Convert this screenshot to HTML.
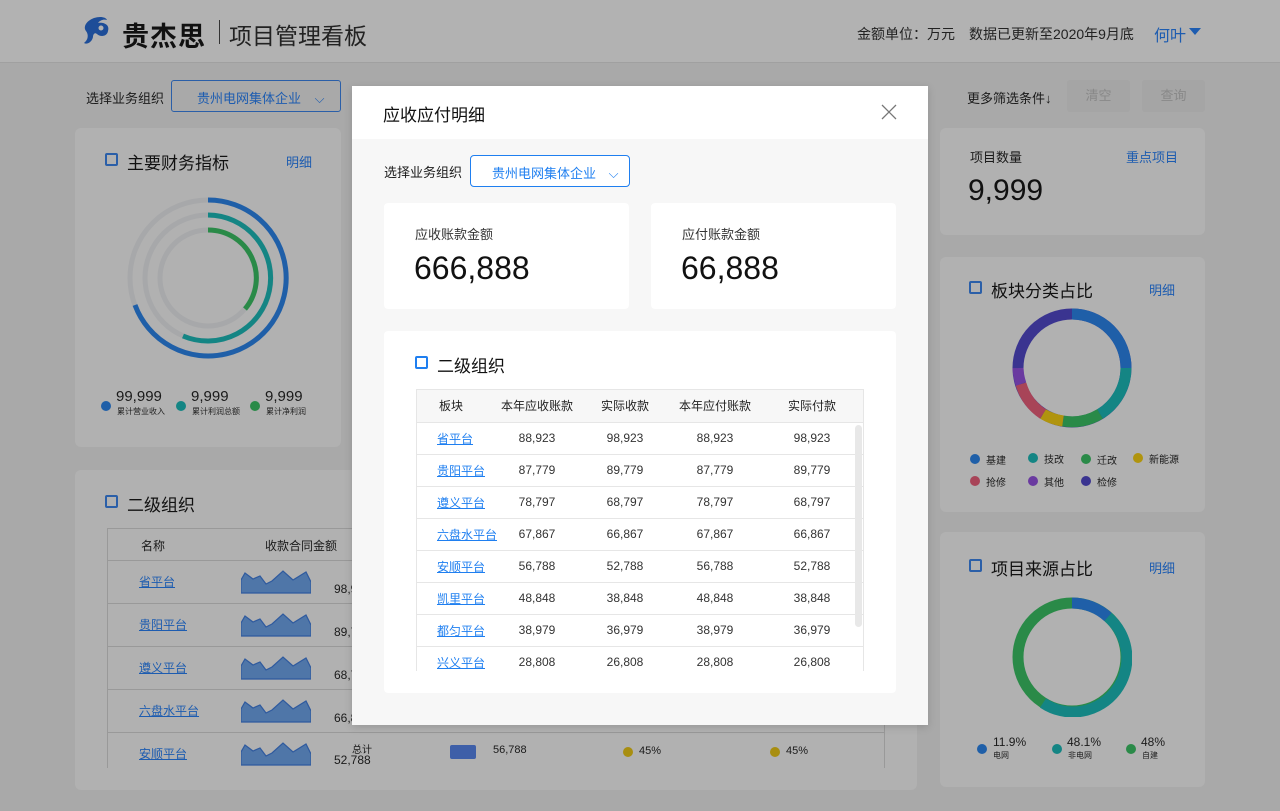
<!DOCTYPE html>
<html><head><meta charset="utf-8">
<style>
*{margin:0;padding:0;box-sizing:border-box}
body{width:1280px;height:811px;overflow:hidden;background:#a9a9a9;font-family:"Liberation Sans","Noto Sans CJK SC",sans-serif;color:#1a1a1a;position:relative}
.abs{position:absolute}
.card{position:absolute;background:#b1b1b1;border-radius:6px}
.cb{position:absolute;width:13px;height:13px;border:2px solid #2b5fa8;border-radius:2px}
.t17{font-size:17px;color:#111}
.lnk{color:#1d5cb0;font-size:13px}
.dot{position:absolute;width:10px;height:10px;border-radius:50%}
.sm{font-size:10px;color:#222}
.m{table-layout:fixed}
.m td{height:32px;border-bottom:1px solid #e6e6e6;font-size:12px;color:#333;text-align:center;white-space:nowrap}
.m td:first-child{text-align:left;padding-left:20px}
.m a{color:#1f7ff0;text-decoration:underline}
.m th{height:32px;font-size:12px;font-weight:normal;color:#222;background:#f7f7f7;border-bottom:1px solid #e6e6e6;white-space:nowrap}
</style></head><body>

<div class="abs" style="left:0;top:0;width:1280px;height:63px;background:#b2b2b2;border-bottom:1px solid #a0a0a0"></div>
<svg class="abs" style="left:80px;top:15px" width="34" height="32" viewBox="0 0 34 32">
<path d="M14 3 C20 1 26 2 27 5 C24 4 20 5 18 8 C24 7 30 10 28 16 C27 22 20 22 17 19 C15 17 13 19 13 22 C12 27 7 30 4 28 C8 25 9 20 6 16 C3 12 6 6 14 3Z" fill="#1d4d98"/>
<circle cx="21" cy="13" r="2.5" fill="#b2b2b2"/>
</svg>
<div class="abs" style="left:122px;top:15px;font-size:27px;font-weight:bold;color:#111;letter-spacing:1px">贵杰思</div>
<div class="abs" style="left:219px;top:20px;width:1px;height:24px;background:#333"></div>
<div class="abs" style="left:229px;top:17px;font-size:23px;color:#222">项目管理看板</div>
<div class="abs" style="left:857px;top:24px;font-size:14px;color:#222">金额单位：万元</div>
<div class="abs" style="left:969px;top:24px;font-size:14px;color:#222">数据已更新至2020年9月底</div>
<div class="abs" style="left:1154px;top:22px;font-size:16px;color:#1d5cb0">何叶</div>
<div class="abs" style="left:1189px;top:28px;width:0;height:0;border-left:6px solid transparent;border-right:6px solid transparent;border-top:7px solid #1d5cb0"></div>

<div class="abs" style="left:86px;top:88px;font-size:13px">选择业务组织</div>
<div class="abs" style="left:171px;top:80px;width:170px;height:32px;border:1px solid #2b5fa8;border-radius:3px;font-size:13px;color:#1d5cb0;padding:7px 0 0 25px;white-space:nowrap">贵州电网集体企业 <span style="margin-left:10px">⌵</span></div>
<div class="abs" style="left:967px;top:88px;font-size:13px">更多筛选条件↓</div>
<div class="abs" style="left:1067px;top:80px;width:63px;height:32px;background:#a5a5a5;border-radius:3px;font-size:13px;color:#888;text-align:center;line-height:32px">清空</div>
<div class="abs" style="left:1142px;top:80px;width:63px;height:32px;background:#a5a5a5;border-radius:3px;font-size:13px;color:#888;text-align:center;line-height:32px">查询</div>

<div class="card" style="left:75px;top:128px;width:266px;height:319px"></div>
<div class="cb" style="left:105px;top:153px"></div>
<div class="abs t17" style="left:127px;top:149px">主要财务指标</div>
<div class="abs lnk" style="left:286px;top:152px">明细</div>
<svg class="abs" style="left:120px;top:190px" width="176" height="176" viewBox="-88 -88 176 176">
<g fill="none" stroke-width="5">
<circle r="78" stroke="#a7a8aa"/><circle r="63" stroke="#a7a8aa"/><circle r="48" stroke="#a7a8aa"/>
<path d="M0 -78 A78 78 0 1 1 -73 27" stroke="#1f5fa8"/>
<path d="M0 -63 A63 63 0 1 1 -25 58" stroke="#148584"/>
<path d="M0 -48 A48 48 0 0 1 37 31" stroke="#2a8a48"/>
</g></svg>
<div class="dot" style="left:101px;top:401px;background:#1f5fa8"></div>
<div class="abs" style="left:116px;top:388px;font-size:15px">99,999</div>
<div class="abs sm" style="left:117px;top:406px;font-size:8px">累计营业收入</div>
<div class="dot" style="left:176px;top:401px;background:#148584"></div>
<div class="abs" style="left:191px;top:388px;font-size:15px">9,999</div>
<div class="abs sm" style="left:192px;top:406px;font-size:8px">累计利润总额</div>
<div class="dot" style="left:250px;top:401px;background:#2a8a48"></div>
<div class="abs" style="left:265px;top:388px;font-size:15px">9,999</div>
<div class="abs sm" style="left:266px;top:406px;font-size:8px">累计净利润</div>

<div class="card" style="left:75px;top:470px;width:842px;height:320px"></div>
<div class="cb" style="left:105px;top:495px"></div>
<div class="abs t17" style="left:127px;top:491px">二级组织</div>
<div class="abs" style="left:107px;top:528px;width:778px;height:240px;border-left:1px solid #999;border-right:1px solid #999;border-top:1px solid #999"></div>
<div class="abs" style="left:107px;top:560px;width:778px;height:1px;background:#999"></div>
<div class="abs" style="left:141px;top:537px;font-size:12px">名称</div>
<div class="abs" style="left:265px;top:537px;font-size:12px">收款合同金额</div>
<div id="lrows"></div>

<div class="card" style="left:940px;top:128px;width:265px;height:107px"></div>
<div class="abs" style="left:970px;top:147px;font-size:13px">项目数量</div>
<div class="abs lnk" style="left:1126px;top:147px">重点项目</div>
<div class="abs" style="left:968px;top:174px;font-size:30px;color:#111">9,999</div>

<div class="card" style="left:940px;top:257px;width:265px;height:255px"></div>
<div class="cb" style="left:969px;top:281px"></div>
<div class="abs t17" style="left:991px;top:277px">板块分类占比</div>
<div class="abs lnk" style="left:1149px;top:280px">明细</div>
<svg class="abs" style="left:1012px;top:308px" width="120" height="120" viewBox="-60 -60 120 120">
<g fill="none" stroke-width="11">
<circle r="54" stroke="#3a3490"/>
<path d="M0 -54 A54 54 0 0 1 54 0" stroke="#1f5fa8"/>
<path d="M54 0 A54 54 0 0 1 28 46" stroke="#148584"/>
<path d="M28 46 A54 54 0 0 1 -9 53" stroke="#2a8a48"/>
<path d="M-9 53 A54 54 0 0 1 -29 46" stroke="#b0940e"/>
<path d="M-29 46 A54 54 0 0 1 -51 16" stroke="#a84458"/>
<path d="M-51 16 A54 54 0 0 1 -54 0" stroke="#6a3aa0"/>
</g></svg>
<div id="leg1"></div>

<div class="card" style="left:940px;top:532px;width:265px;height:255px"></div>
<div class="cb" style="left:969px;top:559px"></div>
<div class="abs t17" style="left:991px;top:555px">项目来源占比</div>
<div class="abs lnk" style="left:1149px;top:558px">明细</div>
<svg class="abs" style="left:1012px;top:597px" width="120" height="120" viewBox="-60 -60 120 120">
<g fill="none" stroke-width="11">
<circle r="54" stroke="#2a8a48"/>
<path d="M0 -54 A54 54 0 0 1 36 -40" stroke="#1f5fa8"/>
<path d="M36 -40 A54 54 0 0 1 -29 46" stroke="#148584"/>
</g></svg>
<div class="dot" style="left:977px;top:744px;background:#1f5fa8"></div>
<div class="abs" style="left:993px;top:735px;font-size:12px">11.9%</div>
<div class="abs sm" style="left:993px;top:750px;font-size:8px">电网</div>
<div class="dot" style="left:1052px;top:744px;background:#148584"></div>
<div class="abs" style="left:1067px;top:735px;font-size:12px">48.1%</div>
<div class="abs sm" style="left:1068px;top:750px;font-size:8px">非电网</div>
<div class="dot" style="left:1126px;top:744px;background:#2a8a48"></div>
<div class="abs" style="left:1141px;top:735px;font-size:12px">48%</div>
<div class="abs sm" style="left:1142px;top:750px;font-size:8px">自建</div>

<div class="abs" style="left:352px;top:86px;width:576px;height:639px;background:#f7f7f7;box-shadow:0 2px 8px rgba(0,0,0,.15)"></div>
<div class="abs" style="left:352px;top:86px;width:576px;height:53px;background:#fff"></div>
<div class="abs" style="left:383px;top:101px;font-size:17px;color:#111">应收应付明细</div>
<svg class="abs" style="left:881px;top:104px" width="16" height="16"><path d="M1 1L15 15M15 1L1 15" stroke="#777" stroke-width="1.3"/></svg>
<div class="abs" style="left:384px;top:162px;font-size:13px">选择业务组织</div>
<div class="abs" style="left:470px;top:155px;width:160px;height:32px;border:1px solid #1f7ff0;border-radius:4px;background:#fff;font-size:13px;color:#1f7ff0;padding:7px 0 0 21px;white-space:nowrap">贵州电网集体企业 <span style="margin-left:9px">⌵</span></div>
<div class="abs" style="left:384px;top:203px;width:245px;height:106px;background:#fff;border-radius:4px"></div>
<div class="abs" style="left:415px;top:224px;font-size:13px;color:#333">应收账款金额</div>
<div class="abs" style="left:414px;top:250px;font-size:32px;color:#111">666,888</div>
<div class="abs" style="left:651px;top:203px;width:245px;height:106px;background:#fff;border-radius:4px"></div>
<div class="abs" style="left:682px;top:224px;font-size:13px;color:#333">应付账款金额</div>
<div class="abs" style="left:681px;top:250px;font-size:32px;color:#111">66,888</div>
<div class="abs" style="left:384px;top:331px;width:512px;height:362px;background:#fff;border-radius:4px"></div>
<div class="abs" style="left:415px;top:356px;width:13px;height:13px;border:2px solid #1f7ff0;border-radius:2px"></div>
<div class="abs t17" style="left:437px;top:352px">二级组织</div>
<div class="abs" style="left:416px;top:389px;width:448px;height:282px;overflow:hidden;border:1px solid #e6e6e6;border-bottom:none">
<table class="m" style="width:446px;border-collapse:collapse">
<colgroup><col style="width:76px"><col style="width:88px"><col style="width:88px"><col style="width:92px"><col></colgroup>
<tr><th style="text-align:left;padding-left:22px">板块</th><th>本年应收账款</th><th>实际收款</th><th>本年应付账款</th><th>实际付款</th></tr>
<tr><td><a>省平台</a></td><td>88,923</td><td>98,923</td><td>88,923</td><td>98,923</td></tr>
<tr><td><a>贵阳平台</a></td><td>87,779</td><td>89,779</td><td>87,779</td><td>89,779</td></tr>
<tr><td><a>遵义平台</a></td><td>78,797</td><td>68,797</td><td>78,797</td><td>68,797</td></tr>
<tr><td><a>六盘水平台</a></td><td>67,867</td><td>66,867</td><td>67,867</td><td>66,867</td></tr>
<tr><td><a>安顺平台</a></td><td>56,788</td><td>52,788</td><td>56,788</td><td>52,788</td></tr>
<tr><td><a>凯里平台</a></td><td>48,848</td><td>38,848</td><td>48,848</td><td>38,848</td></tr>
<tr><td><a>都匀平台</a></td><td>38,979</td><td>36,979</td><td>38,979</td><td>36,979</td></tr>
<tr><td><a>兴义平台</a></td><td>28,808</td><td>26,808</td><td>28,808</td><td>26,808</td></tr>
</table>
<div class="abs" style="left:438px;top:35px;width:7px;height:202px;background:#e8e8e8;border-radius:4px"></div>
</div>

<script>
var names=["省平台","贵阳平台","遵义平台","六盘水平台","安顺平台"],nums=["98,9","89,7","68,7","66,8",""];
var h="";
for(var i=0;i<5;i++){var y=560+i*43;
h+='<div class="abs" style="left:139px;top:'+(y+13)+'px;font-size:12px;color:#1d5cb0;text-decoration:underline">'+names[i]+'</div>';
h+='<svg class="abs" style="left:241px;top:'+(y+10)+'px" width="70" height="24"><path d="M0 23 L0 10 L4 3 L12 9 L19 6 L25 14 L31 11 L42 1 L52 10 L65 2 L70 12 L70 23Z" fill="#4f76a8" stroke="#2f5a9e" stroke-width="1.2"/></svg>';
if(i<4){h+='<div class="abs" style="left:334px;top:'+(y+22)+'px;font-size:12px">'+nums[i]+'</div>';}
if(i<4)h+='<div class="abs" style="left:107px;top:'+(y+43)+'px;width:778px;height:1px;background:#999"></div>';}
h+='<div class="abs" style="left:352px;top:741px;font-size:10px">总计</div><div class="abs" style="left:334px;top:753px;font-size:12px">52,788</div>';
h+='<div class="abs" style="left:450px;top:745px;width:26px;height:14px;background:#3e5fa8;border-radius:2px"></div><div class="abs" style="left:493px;top:744px;font-size:11px">56,788</div>';
h+='<div class="dot" style="left:623px;top:747px;background:#a88e10"></div><div class="abs" style="left:639px;top:745px;font-size:11px">45%</div>';
h+='<div class="dot" style="left:770px;top:747px;background:#a88e10"></div><div class="abs" style="left:786px;top:745px;font-size:11px">45%</div>';
document.getElementById("lrows").innerHTML=h;
var L=[["基建","#1f5fa8",970,452],["技改","#148584",1028,451],["迁改","#2a8a48",1081,452],["新能源","#b0940e",1133,451],["抢修","#a84458",970,474],["其他","#6a3aa0",1028,474],["检修","#3a3490",1081,474]],g="";
L.forEach(function(a){g+='<div class="dot" style="left:'+a[2]+'px;top:'+(a[3]+2)+'px;background:'+a[1]+'"></div><div class="abs" style="left:'+(a[2]+16)+'px;top:'+a[3]+'px;font-size:10px">'+a[0]+'</div>';});
document.getElementById("leg1").innerHTML=g;
</script>
</body></html>
